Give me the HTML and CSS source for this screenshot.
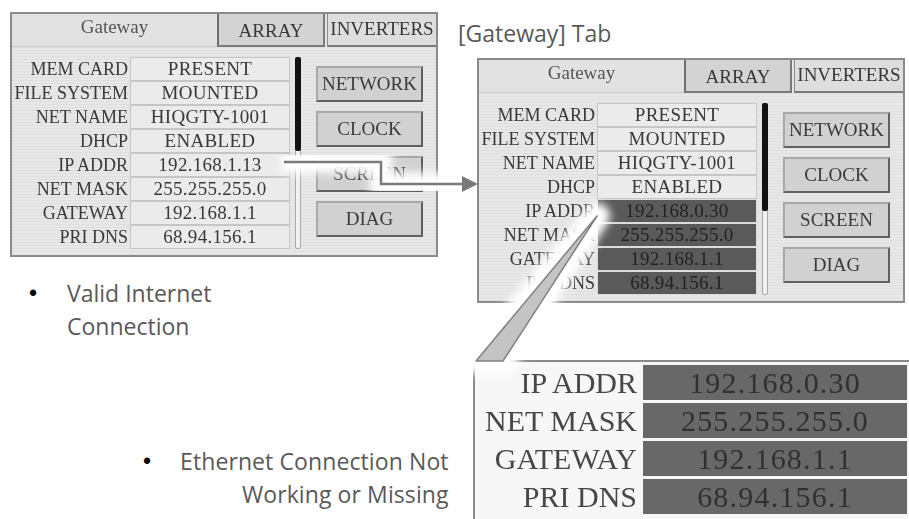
FILE: index.html
```html
<!DOCTYPE html>
<html lang="en">
<head>
    <meta charset="UTF-8">
    <meta name="viewport" content="width=device-width, initial-scale=1.0">
    <title>Gateway Tab</title>
    <link rel="stylesheet" href="styles.css">
</head>
<body>
    <div class="slide">
        <div class="col-left">
            <!-- connected unit -->
            <div class="screen">
                <div class="tabs">
                    <div class="tab tab-active">Gateway</div>
                    <div class="tab tab-array">ARRAY</div>
                    <div class="tab tab-inv">INVERTERS</div>
                </div>
                <div class="screen-body">
                    <div class="fields">
                        <div class="label">MEM CARD</div><div class="value">PRESENT</div>
                        <div class="label">FILE SYSTEM</div><div class="value">MOUNTED</div>
                        <div class="label">NET NAME</div><div class="value">HIQGTY-1001</div>
                        <div class="label">DHCP</div><div class="value">ENABLED</div>
                        <div class="label">IP ADDR</div><div class="value">192.168.1.13</div>
                        <div class="label">NET MASK</div><div class="value">255.255.255.0</div>
                        <div class="label">GATEWAY</div><div class="value">192.168.1.1</div>
                        <div class="label">PRI DNS</div><div class="value">68.94.156.1</div>
                    </div>
                    <div class="scroll"><div class="thumb"></div></div>
                    <div class="buttons">
                        <div class="btn">NETWORK</div>
                        <div class="btn">CLOCK</div>
                        <div class="btn">SCREEN</div>
                        <div class="btn">DIAG</div>
                    </div>
                </div>
            </div>

            <ul class="note note-valid">
                <li><span class="dot">&bull;</span><span class="txt">Valid Internet<br>Connection</span></li>
            </ul>
            <ul class="note note-missing">
                <li><span class="dot">&bull;</span><span class="txt">Ethernet Connection Not<br>Working or Missing</span></li>
            </ul>
        </div>

        <div class="col-right">
            <div class="caption">[Gateway] Tab</div>

            <!-- unit without ethernet -->
            <div class="screen screen-offline">
                <div class="tabs">
                    <div class="tab tab-active">Gateway</div>
                    <div class="tab tab-array">ARRAY</div>
                    <div class="tab tab-inv">INVERTERS</div>
                </div>
                <div class="screen-body">
                    <div class="fields">
                        <div class="label">MEM CARD</div><div class="value">PRESENT</div>
                        <div class="label">FILE SYSTEM</div><div class="value">MOUNTED</div>
                        <div class="label">NET NAME</div><div class="value">HIQGTY-1001</div>
                        <div class="label">DHCP</div><div class="value">ENABLED</div>
                        <div class="label">IP ADDR</div><div class="value value-bad">192.168.0.30</div>
                        <div class="label">NET MASK</div><div class="value value-bad">255.255.255.0</div>
                        <div class="label">GATEWAY</div><div class="value value-bad">192.168.1.1</div>
                        <div class="label">PRI DNS</div><div class="value value-bad">68.94.156.1</div>
                    </div>
                    <div class="scroll"><div class="thumb thumb-long"></div></div>
                    <div class="buttons">
                        <div class="btn">NETWORK</div>
                        <div class="btn">CLOCK</div>
                        <div class="btn">SCREEN</div>
                        <div class="btn">DIAG</div>
                    </div>
                </div>
            </div>

            <div class="zoom-box">
                <div class="zlabel">IP ADDR</div><div class="zvalue">192.168.0.30</div>
                <div class="zlabel">NET MASK</div><div class="zvalue">255.255.255.0</div>
                <div class="zlabel">GATEWAY</div><div class="zvalue">192.168.1.1</div>
                <div class="zlabel">PRI DNS</div><div class="zvalue">68.94.156.1</div>
            </div>
        </div>

        <svg class="overlay" width="909" height="519" viewBox="0 0 909 519">
            <defs>
                <filter id="glow" x="-30%" y="-30%" width="160%" height="160%">
                    <feGaussianBlur stdDeviation="4"/>
                </filter>
            </defs>
            <!-- arrow to second screen -->
            <path d="M282 162 H381 V184 H462" fill="none" stroke="#fff" stroke-width="22" filter="url(#glow)"/>
            <path d="M284 162 H381 V184 H463" fill="none" stroke="#7a7a7a" stroke-width="2.5"/>
            <polygon points="462,176 478,184 462,192" fill="#7a7a7a"/>
            <!-- callout to zoomed rows -->
            <polygon points="597,216 476,361 503,361" fill="#fff" stroke="#fff" stroke-width="26" stroke-linejoin="round" filter="url(#glow)"/>
            <polygon points="597,216 476,361 503,361" fill="#c4c4c4" stroke="#808080" stroke-width="1.5" stroke-linejoin="round"/>
        </svg>
    </div>
</body>
</html>
```

FILE: styles.css
```css
body {
    margin: 0;
    padding: 0;
    background-color: #fff;
    font-family: "Liberation Serif", serif;
    overflow: hidden;
}
.slide {
    position: relative;
    width: 909px;
    height: 519px;
    overflow: hidden;
    display: grid;
    grid-template-columns: 455px 1fr;
}
.col-left {
    padding: 12px 0 0 10px;
}
.col-right {
    padding-top: 17px;
}
.caption {
    padding-left: 3px;
    font-family: "Open Sans", sans-serif;
    font-size: 23px;
    line-height: 33px;
    color: #595959;
}

/* device screen */
.screen {
    box-sizing: border-box;
    width: 428px;
    height: 245px;
    border: 2px solid #8b8b8b;
    background-color: #e7e7e7;
    background-image: repeating-linear-gradient(0deg, rgba(0, 0, 0, 0.03) 0 1px, transparent 1px 3px);
    color: #383838;
    filter: blur(0.35px);
}
.screen-offline {
    margin: 8px 0 0 22px;
}
.tabs {
    display: grid;
    grid-template-columns: 205px 108px 1fr;
    height: 33px;
    font-size: 19px;
}
.tab {
    display: flex;
    align-items: center;
    justify-content: center;
    box-sizing: border-box;
    white-space: nowrap;
}
.tab-active {
    padding-bottom: 6px;
    background-color: #e2e2e2;
    border-bottom: 1px solid #c9c9c9;
    color: #555;
}
.tab-array {
    padding-top: 3px;
    background-color: #d3d3d3;
    border-left: 2px solid #6e6e6e;
    border-right: 2px solid #7a7a7a;
    border-bottom: 2px solid #7a7a7a;
}
.tab-inv {
    padding-bottom: 2px;
    margin-left: 2px;
    background-color: #dedede;
    border-left: 1px solid #8a8a8a;
    border-bottom: 2px solid #7a7a7a;
}
.screen-body {
    display: flex;
    padding-top: 10px;
}
.fields {
    display: grid;
    grid-template-columns: 116px 160px;
    grid-auto-rows: 24px;
    column-gap: 2px;
}
.label {
    font-size: 18px;
    line-height: 24px;
    text-align: right;
    white-space: nowrap;
}
.value {
    box-sizing: border-box;
    border: 1px solid #c6c6c6;
    background-color: #ebebeb;
    font-size: 19px;
    letter-spacing: 0.3px;
    line-height: 22px;
    text-align: center;
    white-space: nowrap;
}
.value-bad {
    background-color: #5a5a5a;
    border-color: #dcdcdc;
    color: #222;
}
.scroll {
    box-sizing: border-box;
    width: 6px;
    height: 192px;
    margin-left: 5px;
    border: 1px solid #a9a9a9;
    border-radius: 2px;
    background-color: #f2f2f2;
}
.thumb {
    height: 94px;
    margin: -1px;
    background-color: #121212;
    border-radius: 2px;
}
.thumb-long {
    height: 108px;
}
.buttons {
    display: flex;
    flex-direction: column;
    gap: 9px;
    width: 107px;
    margin-left: 15px;
    padding-top: 9px;
}
.btn {
    box-sizing: border-box;
    height: 36px;
    display: flex;
    align-items: center;
    justify-content: center;
    border: 2px solid;
    border-color: #a8a8a8 #606060 #606060 #a8a8a8;
    background-color: #d1d1d1;
    font-size: 19px;
    color: #3a3a3a;
}

/* zoomed rows */
.zoom-box {
    box-sizing: border-box;
    width: 440px;
    height: 170px;
    margin: 57px 0 0 18px;
    padding-top: 3px;
    border-top: 2px solid #8a8a8a;
    border-left: 2px solid #8a8a8a;
    background-color: #f7f7f7;
    display: grid;
    grid-template-columns: 162px 264px;
    grid-auto-rows: 35px;
    column-gap: 6px;
    row-gap: 3px;
    filter: blur(0.4px);
}
.zlabel {
    font-size: 30px;
    line-height: 35px;
    text-align: right;
    white-space: nowrap;
    color: #474747;
}
.zvalue {
    background-color: #686868;
    font-size: 30px;
    letter-spacing: 1.2px;
    line-height: 35px;
    text-align: center;
    color: #303030;
}

/* bullet notes */
.note {
    list-style: none;
    margin: 0;
    padding: 0;
    font-family: "Open Sans", sans-serif;
    font-size: 23px;
    line-height: 33px;
    color: #595959;
}
.note li {
    display: flex;
}
.dot {
    font-family: "Liberation Sans", sans-serif;
    color: #000;
}
.txt {
    display: inline-block;
    white-space: nowrap;
}
.note-valid {
    margin-top: 20px;
}
.note-valid .dot {
    width: 38px;
    margin-left: 19px;
}
.note-missing {
    margin-top: 102px;
}
.note-missing .dot {
    width: 37px;
    margin-left: 133px;
}
.note-missing .txt {
    text-align: right;
    letter-spacing: 0.1px;
}

.overlay {
    position: absolute;
    top: 0;
    left: 0;
    pointer-events: none;
}
```
